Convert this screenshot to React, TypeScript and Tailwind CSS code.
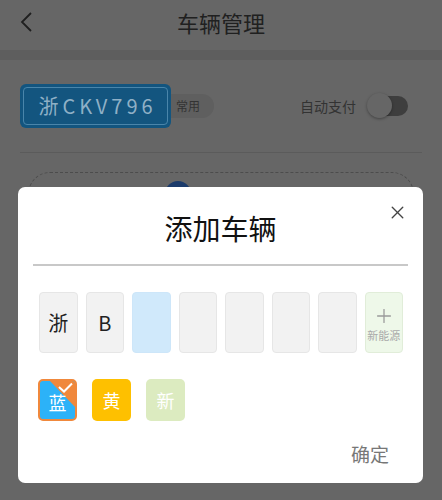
import { X, Plus } from "lucide-react";

const font = { fontFamily: '"Noto Sans CJK SC", "Noto Sans", sans-serif' };

const slots = ["浙", "B", "", "", "", "", ""];

export default function App() {
  return (
    <div className="relative w-[442px] h-[500px] overflow-hidden bg-[#666666]" style={font}>
      {/* dimmed page underneath */}
      <div className="flex flex-col">
        <div className="relative h-[50px] flex items-center justify-center">
          <svg className="absolute left-[18px] top-[11px]" width="16" height="22" viewBox="0 0 16 22" fill="none">
            <path d="M13 2 L4 11 L13 20" stroke="#1f1f1f" strokeWidth="1.8" />
          </svg>
          <span className="text-[22px] leading-none text-[#202020] -mt-[6px]">车辆管理</span>
        </div>
        <div className="h-[10px] bg-[#5e5e5e]" />

        <div className="flex items-center px-[20px] pt-[24px]">
          <div className="w-[151px] h-[44px] rounded-[6px] bg-[#13557f] p-[3px] z-10">
            <div className="h-full rounded-[4px] border border-[#4a85aa] flex items-center justify-center text-[20px] tracking-[0.2em] pl-[4px] text-[#8fb0c6]">
              浙CKV796
            </div>
          </div>
          <div className="h-[24px] -ml-[4px] pl-[9px] pr-[14px] rounded-r-full bg-[#5f5f5f] flex items-center text-[12px] text-[#333]">
            常用
          </div>
          <div className="ml-auto flex items-center gap-[12px] pr-[14px]">
            <span className="text-[14px] text-[#333]">自动支付</span>
            <div className="relative w-[40px] h-[20px] rounded-full bg-[#3e3e3e]">
              <div className="absolute -left-[1px] -top-[3px] w-[25px] h-[25px] rounded-full bg-[#666] shadow-[0_1px_3px_rgba(0,0,0,0.35)]" />
            </div>
          </div>
        </div>

        <div className="mx-[20px] mt-[24px] h-px bg-[#5b5b5b]" />

        <div className="relative mx-[28px] mt-[19px] h-[200px] rounded-t-[22px] border-[1.5px] border-dashed border-[#4c4c4c]">
          <div className="absolute left-[136px] top-[8px] w-[26px] h-[26px] rounded-full bg-[#1b3a6a]" />
        </div>
      </div>

      {/* modal */}
      <div className="absolute left-[18px] top-[187px] w-[405px] rounded-[7px] bg-white flex flex-col pt-[21px] pb-[15px]">
        <button className="absolute right-[15px] top-[15px] text-[#444]">
          <X size={21} strokeWidth={1.6} />
        </button>
        <div className="text-center text-[28px] leading-[40px] text-[#111]">添加车辆</div>
        <div className="mx-[15px] mt-[16px] h-[2px] bg-[#c8c8c8]" />

        <div className="grid grid-cols-8 gap-[8px] pl-[21px] pr-[20px] mt-[26px]">
          {slots.map((s, i) => (
            <div
              key={i}
              className={
                i === 2
                  ? "h-[61px] rounded-[4px] border border-[#cde6f9] bg-[#d0e9fb]"
                  : "h-[61px] rounded-[4px] border border-[#e6e6e6] bg-[#f2f2f2] flex items-center justify-center text-[20px] text-[#222]"
              }
            >
              {s}
            </div>
          ))}
          <div className="h-[61px] rounded-[4px] border border-[#e1edd9] bg-[#eef8e9] flex flex-col items-center justify-center text-[#9a9a9a]">
            <Plus size={22} strokeWidth={1.4} className="mt-[2px]" />
            <span className="text-[11px] leading-[16px] text-[#aaa]">新能源</span>
          </div>
        </div>

        <div className="flex gap-[15px] pl-[20px] mt-[26px]">
          <div className="relative w-[39px] h-[42px] rounded-[5px] border-2 border-[#f0883c] bg-[#2cb2f8] overflow-hidden flex items-center justify-center text-[18px] text-white">
            <svg className="absolute inset-0" width="100%" height="100%" viewBox="0 0 35 38" preserveAspectRatio="none">
              <polygon points="10,0 35,0 35,26" fill="#f0883c" />
              <path d="M19 6 L24 10.5 L32 2.5" stroke="white" strokeWidth="2" fill="none" />
            </svg>
            <span className="relative mt-[4px]">蓝</span>
          </div>
          <div className="w-[39px] h-[42px] rounded-[5px] bg-[#fec000] flex items-center justify-center text-[18px] text-white">
            黄
          </div>
          <div className="w-[39px] h-[42px] rounded-[5px] bg-[#dcebc0] flex items-center justify-center text-[18px] text-white">
            新
          </div>
        </div>

        <div className="flex justify-end pr-[34px] mt-[19px]">
          <span className="text-[19px] leading-[28px] text-[#777]">确定</span>
        </div>
      </div>
    </div>
  );
}
